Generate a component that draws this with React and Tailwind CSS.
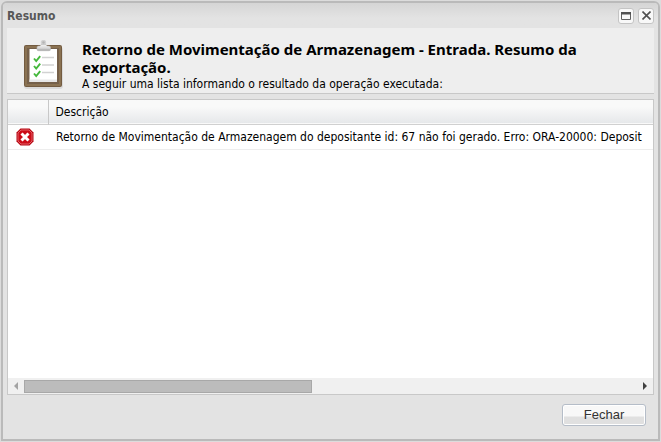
import { useState } from "react";

const rows = [
  {
    id: 1,
    message:
      "Retorno de Movimentação de Armazenagem do depositante id: 67 não foi gerado. Erro: ORA-20000: Deposit",
  },
];

function ClipboardIcon() {
  return (
    <svg width="42" height="52" viewBox="0 0 42 52" aria-hidden="true">
      <defs>
        <linearGradient id="clip" x1="0" y1="0" x2="0" y2="1">
          <stop offset="0" stopColor="#f6f6f6" />
          <stop offset="0.6" stopColor="#d6d6d6" />
          <stop offset="1" stopColor="#9c9c9c" />
        </linearGradient>
      </defs>
      <rect x="0" y="7" width="39" height="42" rx="3" fill="#dadada" />
      <rect x="0" y="5" width="38" height="42" rx="2" fill="#735b40" />
      <rect x="1" y="6" width="36" height="40" rx="1" fill="#8a7252" />
      <rect x="3" y="8" width="32" height="36" fill="#75604a" />
      <rect x="5.500" y="9" width="27.500" height="33" fill="#ffffff" />
      <path d="M5.500 39.500h27.500v2.500H5.500z" fill="#e6e6e6" />
      <circle cx="19.500" cy="2.500" r="2" fill="#b4b4b4" stroke="#d2d2d2" strokeWidth="1.400" />
      <path
        d="M17 4.500h5l1 1.500h2q1.500 0 1.500 1.500v2q0 1.200-1.500 1.200H14.500q-1.500 0-1.500-1.200v-2q0-1.500 1.500-1.500h1.500z"
        fill="url(#clip)"
        stroke="#b8b8b8"
        strokeWidth="0.6"
      />
      <path
        d="M10 18.500l2.200 2.600 4-5M10 26l2.200 2.600 4-5M10 33.500l2.200 2.600 4-5"
        fill="none"
        stroke="#45b83c"
        strokeWidth="1.900"
      />
      <path d="M18 17.500h12M18 25h12M18 32.500h12" stroke="#d2d2d2" strokeWidth="1.400" />
    </svg>
  );
}

function ErrorIcon() {
  return (
    <svg width="18" height="18" viewBox="0 0 18 18" role="img" aria-label="Erro">
      <path d="M4.500.5h9l4 4v9l-4 4h-9l-4-4v-9z" fill="#b80712" />
      <path d="M5 2h8l3 3v8l-3 3H5l-3-3V5z" fill="#cc0c18" stroke="#e8767c" strokeWidth="0.800" />
      <path d="M5.500 5.500l7 7M12.500 5.500l-7 7" stroke="#ffffff" strokeWidth="3" />
    </svg>
  );
}

function ToolButton({ label, onClick, children }) {
  return (
    <button
      type="button"
      aria-label={label}
      onClick={onClick}
      className="flex h-4 w-4 items-center justify-center rounded-[3px] border border-[#c4c4c4] bg-[#f8f8f8]"
    >
      {children}
    </button>
  );
}

function ResultGrid() {
  return (
    <div className="flex min-w-0 flex-1 flex-col border border-[#c8c8c8] bg-white">
      <div className="flex-1 overflow-hidden">
        <table className="w-full border-collapse text-left text-xs whitespace-nowrap">
          <thead>
            <tr className="h-6 border-b border-[#d0d0d0] bg-linear-to-b from-[#f9f9f9] from-30% to-[#e6e8ea]">
              <th className="w-10 min-w-10 border-r border-[#c8c8c8]" aria-label="Situação"></th>
              <th className="px-[7px] font-normal">Descrição</th>
            </tr>
          </thead>
          <tbody>
            {rows.map((row) => (
              <tr key={row.id} className="h-[25px] border-b border-[#ededed]">
                <td className="pl-2">
                  <ErrorIcon />
                </td>
                <td className="px-2">{row.message}</td>
              </tr>
            ))}
          </tbody>
        </table>
      </div>
      <div className="flex h-4 items-center bg-[#f0f0f0]">
        <button type="button" aria-label="Rolar para a esquerda" className="flex h-4 w-4 items-center justify-center">
          <svg width="4" height="8" viewBox="0 0 4 8">
            <path d="M4 0v8L0 4z" fill="#a3a3a3" />
          </svg>
        </button>
        <div className="flex-1">
          <div className="h-[13px] w-[47%] border border-[#a8a8a8] bg-[#bcbcbc]"></div>
        </div>
        <button type="button" aria-label="Rolar para a direita" className="flex h-4 w-4 items-center justify-center">
          <svg width="4" height="8" viewBox="0 0 4 8">
            <path d="M0 0v8l4-4z" fill="#404040" />
          </svg>
        </button>
      </div>
    </div>
  );
}

export default function App() {
  const [open, setOpen] = useState(true);
  const [maximized, setMaximized] = useState(false);

  if (!open) return null;

  return (
    <div className="flex min-h-screen bg-[#dcdcdc] p-px font-['DejaVu_Sans_Condensed',Tahoma,'DejaVu_Sans',sans-serif] text-black">
      <section
        aria-labelledby="window-title"
        className={`flex min-w-0 flex-1 flex-col border-2 border-[#bababa] bg-[#e3e3e3] px-1 ${
          maximized ? "" : "rounded-t-md"
        }`}
      >
        <header className="-mx-1 flex h-[25px] items-center justify-between rounded-t bg-linear-to-b from-[#d5d5d5] to-[#e3e3e3] to-60% px-1">
          <h1 id="window-title" className="text-xs font-bold text-[#585858]">
            Resumo
          </h1>
          <div className="flex gap-1">
            <ToolButton label="Maximizar" onClick={() => setMaximized(!maximized)}>
              <svg width="10" height="8" viewBox="0 0 10 8">
                <path d="M.5.5h9v7h-9z" fill="none" stroke="#606060" />
                <path d="M0 0h10v2.500H0z" fill="#505050" />
              </svg>
            </ToolButton>
            <ToolButton label="Fechar janela" onClick={() => setOpen(false)}>
              <svg width="9" height="9" viewBox="0 0 9 9">
                <path d="M.5.5l8 8M8.500.5l-8 8" stroke="#505050" strokeWidth="1.600" />
              </svg>
            </ToolButton>
          </div>
        </header>

        <div className="flex items-start gap-4 border-b border-[#c8c8c8] bg-[#eeeeee] pt-3 pb-px pl-[17px]">
          <div className="shrink-0">
            <ClipboardIcon />
          </div>
          <div className="min-w-0 flex-1">
            <h2 className="font-['Noto_Sans',sans-serif] text-[15px] leading-[18px] font-bold">
              Retorno de Movimentação de Armazenagem - Entrada. Resumo da exportação.
            </h2>
            <p className="text-xs leading-4">A seguir uma lista informando o resultado da operação executada:</p>
          </div>
        </div>

        <div className="h-[5px] shrink-0"></div>
        <ResultGrid />

        <footer className="flex justify-end px-2 pt-[9px] pb-[13px]">
          <button
            type="button"
            onClick={() => setOpen(false)}
            className="h-[22px] w-[84px] rounded-[3px] border border-[#b5bdc8] bg-linear-to-b from-[#f8f8f8] from-55% to-[#e0e0e0] to-60% font-['Liberation_Sans',Arial,sans-serif] text-[13px] leading-5 text-[#333333] shadow-[inset_0_0_0_1px_#ffffff]"
          >
            Fechar
          </button>
        </footer>
      </section>
    </div>
  );
}
